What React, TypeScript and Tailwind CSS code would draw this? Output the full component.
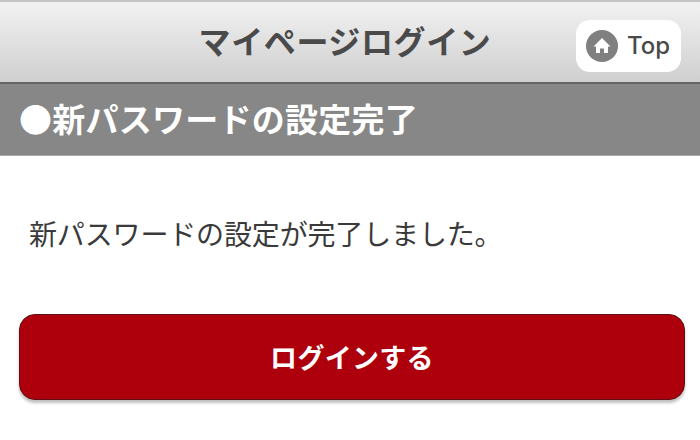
export default function App() {
  const jp = "font-['Noto_Sans_CJK_JP','Noto_Sans','Liberation_Sans',sans-serif]";
  return (
    <div className={`w-[700px] h-[440px] overflow-hidden bg-white flex flex-col ${jp}`}>
      <header className="h-[84px] shrink-0 flex items-center relative bg-gradient-to-b from-[#f2f2f2] to-[#cfcfcf] border-t-2 border-t-[#c4c4c4] border-b-2 border-b-[#666666]">
        <h1 className="w-full text-center text-[32px] leading-none font-semibold text-[#4a4a4a] tracking-[0.6px] pr-[10px] pb-[5px]">マイページログイン</h1>
        <div className="absolute left-[576px] top-[18px] w-[105px] h-[52px] bg-white rounded-[14px] flex items-center pl-[10px] gap-[9px]">
          <svg width="32" height="32" viewBox="0 0 32 32" className="shrink-0">
            <circle cx="16" cy="16" r="16" fill="#808080" />
            <path d="M16 8 L24.5 16.5 L22 16.5 L22 23 L18 23 L18 18.5 L14 18.5 L14 23 L10 23 L10 16.5 L7.5 16.5 Z" fill="#ffffff" />
          </svg>
          <span className="text-[24px] leading-none font-medium text-[#4a4a4a] font-['Inter','Liberation_Sans',sans-serif]">Top</span>
        </div>
      </header>
      <div className="h-[72px] shrink-0 bg-[#878787] border-b border-b-[#aaaaaa] flex items-center pl-[19px]">
        <h2 className="text-[33px] leading-none font-semibold text-white tracking-[0.25px] pb-[3px]">●新パスワードの設定完了</h2>
      </div>
      <p className="mt-[63px] ml-[29px] text-[28px] leading-none text-[#3a3a3a] tracking-[-0.15px]">新パスワードの設定が完了しました。</p>
      <button className="mt-[67px] ml-[19px] w-[666px] h-[86px] rounded-[16px] bg-[#ae000c] border border-[#5e0f14] shadow-[0_3px_3px_rgba(0,0,0,0.25)] text-white text-[27px] tracking-[0.3px] font-semibold leading-none pb-[2px]">ログインする</button>
    </div>
  );
}
